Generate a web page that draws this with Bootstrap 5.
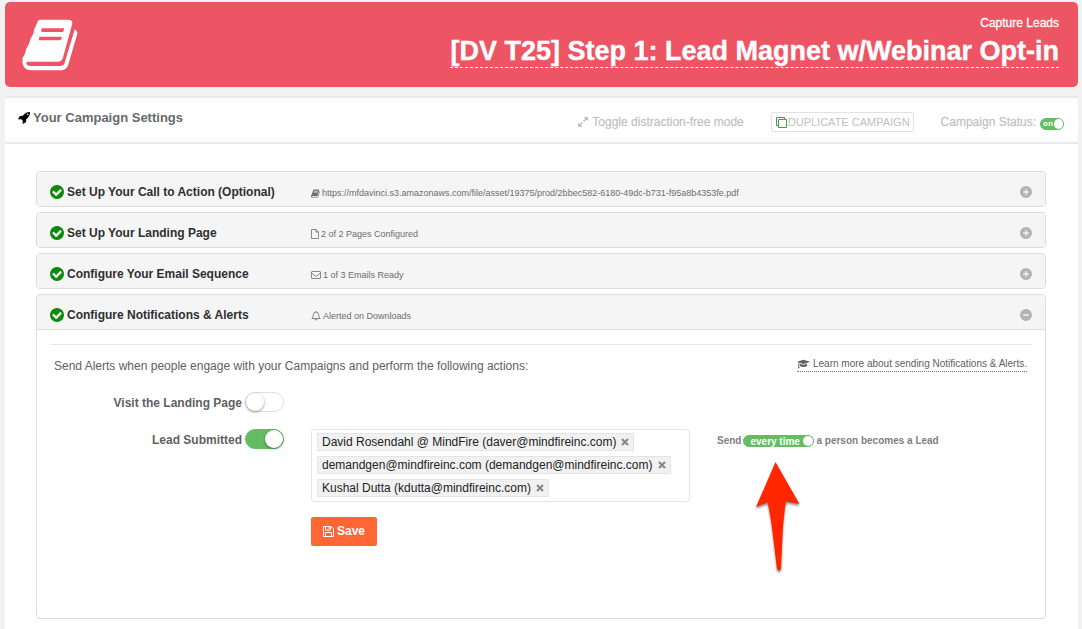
<!DOCTYPE html>
<html lang="en">
<head>
<meta charset="utf-8">
<meta name="viewport" content="width=device-width, initial-scale=1">
<title>Your Campaign Settings</title>
<link rel="stylesheet" href="https://cdn.jsdelivr.net/npm/bootstrap@5.3.0/dist/css/bootstrap.min.css">
<style>
body{background:#f2f2f2;font:12px/18px "Liberation Sans",Arial,sans-serif;color:#5f6163;padding:2px 4px 0 5px;min-height:100vh}
svg{fill:currentColor;flex:none}
.line-icon{fill:none;stroke:currentColor}
.banner{background:#ed5565;color:#fff;border-radius:5px;height:85px;padding:0 19px 0 17px}
.banner-text{padding-bottom:6px}
.banner-kind{font-size:12px;line-height:16px;-webkit-text-stroke:.3px #fff}
.banner-title{font-size:27px;line-height:32px;color:#fff;border-bottom:1px dashed #fff;-webkit-text-stroke:.4px #fff}
.panel{background:#fff;border-top:2px solid #e7eaec;margin-top:9px;flex:1}
.panel-head{height:46px;border-bottom:2px solid #e7eaec;padding:0 14px 0 13px}
.panel-title{font-size:13px;line-height:18px;color:#676a6c;gap:3px}
.tools{color:#bfbfbf;gap:27px;font-size:12px;margin-top:4px}
.tools a,.tools label{-webkit-text-stroke:.2px #bfbfbf}
.btn-dup{font-size:11px;line-height:16px;padding:1px 3px 1px 4px;border:1px solid #e2e2e2;border-radius:2px;color:#bfbfbf;gap:1px}
.btn-dup:hover{color:#999}
.copy-icon{stroke:#43a047}
.panel-main{padding:27px 32px 10px 31px;gap:5px}
.step{border:1px solid #dcdcdc;border-radius:4px}
.step-head{background:#f5f5f5;border-radius:3px;height:34px;padding:6px 13px 0 13px}
.step.open .step-head{border-bottom:1px solid #dcdcdc;border-radius:3px 3px 0 0;height:35px}
.step-title{flex:0 0 261px;font-size:12px;line-height:18px;color:#2f2f2f;gap:3px}
.step-title svg{color:#0b8a0b}
.step-note{font-size:9px;line-height:14px;color:#6d6d6d;gap:2px;min-width:0;padding-top:2px}
.round-btn{width:12px;height:12px;border:0;padding:0;background:none;color:#b3b3b3;line-height:0}
.step-body{padding:14px 13px 72px}
.rule{border-top:1px solid #e4e9ec}
.intro{padding:12px 5px 17px 4px}
.learn{font-size:10px;line-height:14px;color:#5f6163;border-bottom:1px dotted #777;text-decoration:none;gap:3px}
.fields{display:grid;grid-template-columns:234px minmax(0,379px) minmax(0,1fr);grid-template-rows:22px;column-gap:27px;row-gap:15px}
.field-label{font-weight:700;gap:3px}
.field-label label{padding-top:2px}
.switch{appearance:none;margin:0;width:39px;height:20px;border:1px solid #dfdfdf;border-radius:10px;background:#fff;display:flex}
.switch::before{content:"";width:18px;height:18px;border-radius:50%;background:#fff;box-shadow:0 1px 3px rgba(0,0,0,.4)}
.switch:checked{background:#64bd63;border-color:#64bd63;justify-content:flex-end}
.switch-mini{height:12px}
.switch-mini::before{width:10px;height:10px;box-shadow:none}
.switch-status{width:24px}
.switch-status::before{width:9px}
.switch-often{width:71px}
.switch-text{left:3px;top:0;font-size:8px;line-height:11px;font-weight:700;color:#fff;pointer-events:none}
.switch-often + .switch-text{left:7px;font-size:10px;line-height:13px}
.tags{border:1px solid #e2e4e6;border-radius:3px;padding:3px 5px 4px;gap:5px}
.tag{background:#f1f1f1;border:1px solid #e4e4e4;color:#222;height:18px;line-height:16px;padding:0 4px;gap:5px}
.tag button{border:0;padding:0;background:none;color:#888;line-height:0}
.often{font-size:10px;line-height:12px;font-weight:700;color:#808080;padding-top:6px;gap:2px}
.arrow{left:11px;top:26px;color:#ff2600;filter:drop-shadow(0 2px 1px rgba(0,0,0,.45));pointer-events:none}
.btn-save{background:#ff6633;color:#fff;border:0;border-radius:2px;font-size:12px;font-weight:700;line-height:17px;padding:6px 12px;gap:3px}
.btn-save:hover{background:#e65c2e;color:#fff}
</style>
</head>
<body class="d-flex flex-column">
<svg class="d-none">
<symbol id="book" viewBox="66 55 167 156"><path fill-rule="evenodd" d="M119 57h87q13 1 10 14L188 172q-3 10-13 11H86q-8 0-8 4 1 9 14 9h88q10 0 13-8L222 92q1-3 1-6 10 5 8 15L204 193q-5 15-20 16H94q-20 0-26-17-2-5-1-11 0-5 0-9 7-10 10-21 0-4 2-8 7-10 10-21 0-4 2-8 7-10 10-19 0-4 1-9 6-9 8-18 3-10 9-11zM125 83q-3 10-1 11h64q3-1 4-11zM118 108q-3 10-1 11h64q3-1 4-11z"/></symbol>
<symbol id="check" viewBox="128 128 1536 1536"><path d="M1412 734q0-28-18-46l-91-90q-19-19-45-19t-45 19l-408 407-226-226q-19-19-45-19t-45 19l-91 90q-18 18-18 46 0 27 18 45l362 362q19 19 45 19 27 0 46-19l543-543q18-18 18-45zm252 162q0 209-103 385.500t-279.500 279.500-385.500 103-385.500-103-279.500-279.500-103-385.500 103-385.500 279.500-279.500 385.500-103 385.500 103 279.500 279.500 103 385.500z"/></symbol>
<symbol id="plus" viewBox="0 0 12 12"><path fill-rule="evenodd" d="M6 0a6 6 0 1 0 0 12A6 6 0 0 0 6 0zM5.300 3.200h1.400v2.100h2.100v1.400H6.700v2.100H5.300V6.700H3.200V5.300h2.100z"/></symbol>
<symbol id="cross" viewBox="0 0 8 8"><path d="M1 1l6 6M7 1L1 7" stroke="currentColor" stroke-width="2.200"/></symbol>
</svg>

<header class="banner d-flex justify-content-between align-items-center">
  <svg width="56" height="52" role="img" aria-label="Campaign"><use href="#book"/></svg>
  <div class="banner-text d-flex flex-column align-items-end">
    <div class="banner-kind">Capture Leads</div>
    <h1 class="m-0 fs-6 lh-1"><a href="#" class="banner-title fw-bold text-decoration-none d-block mt-1">[DV T25] Step 1: Lead Magnet w/Webinar Opt-in</a></h1>
  </div>
</header>

<main class="panel">
  <div class="panel-head d-flex justify-content-between align-items-center">
    <h2 class="panel-title fw-bold d-flex align-items-center m-0 pb-1">
      <svg width="12" height="12" viewBox="0 128 1664 1664" color="#000"><path d="M1440 448q0-40-28-68t-68-28-68 28-28 68 28 68 68 28 68-28 28-68zm224-288q0 249-75.500 430.500t-253.500 360.500q-81 80-195 176l-20 379q-2 16-16 26l-384 224q-7 4-16 4-12 0-23-9l-64-64q-13-14-8-32l85-276-281-281-276 85q-3 1-9 1-14 0-23-9l-64-64q-17-19-5-39l224-384q10-14 26-16l379-20q96-114 176-195 188-187 358-258t431-71q14 0 24 9.500t10 22.500z"/></svg>Your Campaign Settings</h2>
    <div class="tools d-flex align-items-center">
      <a href="#" class="d-flex align-items-center gap-1 text-reset text-decoration-none"><svg width="10" height="10" viewBox="128 128 1536 1536"><path d="M883 1056q0 13-10 23l-332 332 144 144q19 19 19 45t-19 45-45 19h-448q-26 0-45-19t-19-45v-448q0-26 19-45t45-19 45 19l144 144 332-332q10-10 23-10t23 10l114 114q10 10 10 23zm781-864v448q0 26-19 45t-45 19-45-19l-144-144-332 332q-10 10-23 10t-23-10l-114-114q-10-10-10-23t10-23l332-332-144-144q-19-19-19-45t19-45 45-19h448q26 0 45 19t19 45z"/></svg>Toggle distraction-free mode</a>
      <button type="button" class="btn btn-dup d-flex align-items-center"><svg class="line-icon copy-icon" width="11" height="11" viewBox="0 0 11 11"><path d="M2.500 8.500h-2v-8h8v2M2.500 2.500h8v8h-8z"/></svg>DUPLICATE CAMPAIGN</button>
      <div class="d-flex align-items-center gap-1"><label for="status">Campaign Status:</label>
        <span class="position-relative d-flex mt-1"><input id="status" type="checkbox" role="switch" class="switch switch-mini switch-status" checked><span class="switch-text position-absolute">on</span></span></div>
    </div>
  </div>

  <div class="panel-main d-flex flex-column">
    <section class="step"><div class="step-head d-flex align-items-center">
      <h3 class="step-title fw-bold d-flex align-items-center m-0"><svg width="14" height="14"><use href="#check"/></svg>Set Up Your Call to Action (Optional)</h3>
      <div class="step-note d-flex align-items-center"><svg width="9" height="9"><use href="#book"/></svg>https://mfdavinci.s3.amazonaws.com/file/asset/19375/prod/2bbec582-6180-49dc-b731-f95a8b4353fe.pdf</div>
      <button type="button" class="round-btn ms-auto" aria-label="Expand"><svg width="12" height="12"><use href="#plus"/></svg></button>
    </div></section>
    <section class="step"><div class="step-head d-flex align-items-center">
      <h3 class="step-title fw-bold d-flex align-items-center m-0"><svg width="14" height="14"><use href="#check"/></svg>Set Up Your Landing Page</h3>
      <div class="step-note d-flex align-items-center"><svg class="line-icon" width="8" height="10" viewBox="0 0 8 10"><path stroke-width=".8" d="M.5.500h4.500L7.500 3v6.500h-7zM5 .5V3h2.500"/></svg>2 of 2 Pages Configured</div>
      <button type="button" class="round-btn ms-auto" aria-label="Expand"><svg width="12" height="12"><use href="#plus"/></svg></button>
    </div></section>
    <section class="step"><div class="step-head d-flex align-items-center">
      <h3 class="step-title fw-bold d-flex align-items-center m-0"><svg width="14" height="14"><use href="#check"/></svg>Configure Your Email Sequence</h3>
      <div class="step-note d-flex align-items-center"><svg class="line-icon" width="10" height="8" viewBox="0 0 10 8"><path stroke-width=".8" d="M1 .5h8q.5 0 .5.500v6q0 .5-.5.500H1q-.5 0-.5-.5V1Q.5.500 1 .5zM.5 2l3.700 3q.8.500 1.600 0l3.700-3"/></svg>1 of 3 Emails Ready</div>
      <button type="button" class="round-btn ms-auto" aria-label="Expand"><svg width="12" height="12"><use href="#plus"/></svg></button>
    </div></section>
    <section class="step open"><div class="step-head d-flex align-items-center">
      <h3 class="step-title fw-bold d-flex align-items-center m-0"><svg width="14" height="14"><use href="#check"/></svg>Configure Notifications &amp; Alerts</h3>
      <div class="step-note d-flex align-items-center"><svg class="line-icon" width="10" height="10" viewBox="0 0 10 10"><path stroke-width=".8" d="M5 0v1M.8 7.500Q2.300 6.300 2.300 4q0-2.800 2.700-2.900Q7.700 1.200 7.700 4q0 2.300 1.500 3.500zM4 8q.2 1.200 1 1.200T6 8"/></svg>Alerted on Downloads</div>
      <button type="button" class="round-btn ms-auto" aria-label="Collapse"><svg width="12" height="12" viewBox="0 0 12 12"><path fill-rule="evenodd" d="M6 0a6 6 0 1 0 0 12A6 6 0 0 0 6 0zM3.200 5.300h5.600v1.400H3.200z"/></svg></button>
    </div>
    <div class="step-body">
      <div class="rule"></div>
      <div class="intro d-flex justify-content-between align-items-start">
        <p class="m-0">Send Alerts when people engage with your Campaigns and perform the following actions:</p>
        <a href="#" class="learn d-flex align-items-center"><svg width="13" height="10" viewBox="0 100 2304 1592"><path d="M1774 836l18 316q4 69-82 128t-235 93.500-323 34.500-323-34.500-235-93.500-82-128l18-316 574 181q22 7 48 7t48-7zm530-324q0 23-22 31l-1120 352q-4 1-10 1t-10-1l-652-206q-43 34-71 111.500t-34 178.500q63 36 63 109 0 69-58 107l58 433q2 14-8 25-9 11-24 11h-192q-15 0-24-11-10-11-8-25l58-433q-58-38-58-107 0-73 65-111 11-207 98-330l-333-104q-22-8-22-31t22-31l1120-352q4-1 10-1t10 1l1120 352q22 8 22 31z"/></svg>Learn more about sending Notifications &amp; Alerts.</a>
      </div>
      <form class="fields">
        <div class="field-label d-flex justify-content-end align-items-start"><label for="visit">Visit the Landing Page</label><input id="visit" type="checkbox" role="switch" class="switch"></div>
        <div></div><div></div>
        <div class="field-label d-flex justify-content-end align-items-start"><label for="lead">Lead Submitted</label><input id="lead" type="checkbox" role="switch" class="switch" checked></div>
        <div class="tags d-flex flex-column align-items-start">
          <span class="tag d-flex align-items-center">David Rosendahl @ MindFire (daver@mindfireinc.com)<button type="button" aria-label="Remove David Rosendahl"><svg width="8" height="8"><use href="#cross"/></svg></button></span>
          <span class="tag d-flex align-items-center">demandgen@mindfireinc.com (demandgen@mindfireinc.com)<button type="button" aria-label="Remove demandgen"><svg width="8" height="8"><use href="#cross"/></svg></button></span>
          <span class="tag d-flex align-items-center">Kushal Dutta (kdutta@mindfireinc.com)<button type="button" aria-label="Remove Kushal Dutta"><svg width="8" height="8"><use href="#cross"/></svg></button></span>
        </div>
        <div class="often d-flex align-items-start"><label for="often">Send</label>
          <span class="position-relative d-flex"><input id="often" type="checkbox" role="switch" class="switch switch-mini switch-often" checked><span class="switch-text position-absolute text-nowrap">every time</span>
            <svg class="arrow position-absolute" width="46" height="112" viewBox="0 0 46 112"><path d="M21.500 1L45.500 43 32 40.500Q29.500 55 28.500 75L27 108q-2 3-4 0L19 75Q16.500 53 13.500 41.500L2 46z"/></svg></span>
          <span>a person becomes a Lead</span></div>
        <div></div>
        <div><button type="button" class="btn btn-save d-flex align-items-center"><svg class="line-icon" width="11" height="11" viewBox="0 0 11 11"><path d="M.5.500h7.500L10.500 3v7.500H.5zM2.500.500v3.500h5V.500M2.500 10.500v-4h6v4M6 1v2"/></svg>Save</button></div>
      </form>
    </div></section>
  </div>
</main>
<script src="https://cdn.jsdelivr.net/npm/bootstrap@5.3.0/dist/js/bootstrap.bundle.min.js"></script>
</body>
</html>
